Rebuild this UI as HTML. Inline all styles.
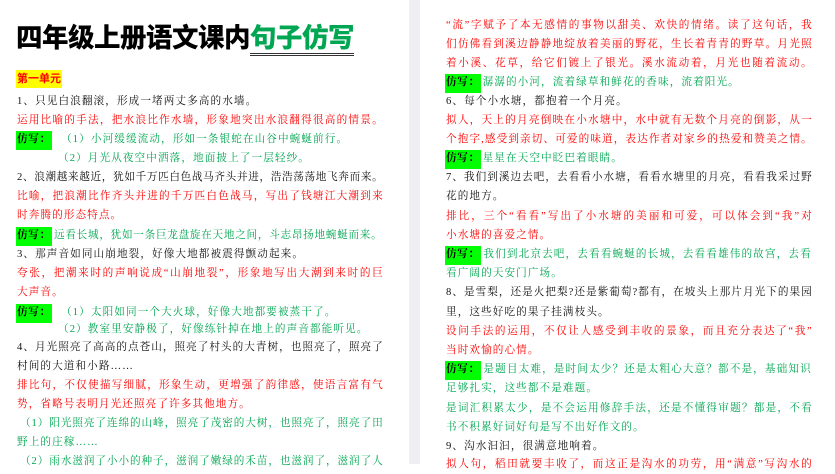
<!DOCTYPE html>
<html><head><meta charset="utf-8"><style>
*{margin:0;padding:0;box-sizing:border-box}
body{width:835px;height:464px;overflow:hidden;background:#fff;position:relative;font-family:"Liberation Serif","Noto Serif CJK SC",serif;}
.gap{position:absolute;left:409px;top:0;width:11px;height:464px;background:#efeff3}
.l{position:absolute;height:18px;line-height:18px;font-size:10.6px;letter-spacing:1.1px;white-space:nowrap}
.f{width:366px;text-align:justify;text-align-last:justify;letter-spacing:0.3px}
.k{color:#111}
.r{color:#ff0000}
.g{color:#00a651}
.hl{background:#00ff00;color:#000;font-weight:bold;display:inline-block;padding:0 1px;height:19px;margin-right:2px;letter-spacing:0.6px}
.title{position:absolute;left:16px;top:21px;font-family:"Liberation Sans","Noto Sans CJK SC",sans-serif;font-weight:900;font-size:26.5px;line-height:34px;letter-spacing:-0.5px;color:#000}
.title span{color:#00a651;border-bottom:3px double #333;}
.unit{position:absolute;left:16px;top:70px;height:18px;line-height:18px;background:#ffff00;color:#ff0000;font-weight:bold;font-size:11px;padding:0 1px;font-family:"Liberation Sans","Noto Sans CJK SC",sans-serif}
</style></head><body>
<div class="gap"></div>
<div class="title">四年级上册语文课内<span>句子仿写</span></div>
<div class="unit">第一单元</div>

<div class="l k" style="left:17px;top:93px">1、只见白浪翻滚，形成一堵两丈多高的水墙。</div>
<div class="l r f" style="left:17px;top:112px">运用比喻的手法，把水浪比作水墙，形象地突出水浪翻得很高的情景。</div>
<div class="l g" style="left:16px;top:131px"><span class="hl">仿写：</span>&nbsp;&nbsp;（1）小河缓缓流动，形如一条银蛇在山谷中蜿蜒前行。</div>
<div class="l g" style="left:58px;top:150px">（2）月光从夜空中洒落，地面披上了一层轻纱。</div>
<div class="l k f" style="left:17px;top:169px">2、浪潮越来越近，犹如千万匹白色战马齐头并进，浩浩荡荡地飞奔而来。</div>
<div class="l r f" style="left:17px;top:188px">比喻，把浪潮比作齐头并进的千万匹白色战马，写出了钱塘江大潮到来</div>
<div class="l r" style="left:17px;top:207px">时奔腾的形态特点。</div>
<div class="l g f" style="left:16px;top:227px"><span class="hl">仿写：</span>远看长城，犹如一条巨龙盘旋在天地之间，斗志昂扬地蜿蜒而来。</div>
<div class="l k" style="left:17px;top:246px">3、那声音如同山崩地裂，好像大地都被震得颤动起来。</div>
<div class="l r f" style="left:17px;top:265px">夸张，把潮来时的声响说成“山崩地裂”，形象地写出大潮到来时的巨</div>
<div class="l r" style="left:17px;top:284px">大声音。</div>
<div class="l g" style="left:16px;top:304px"><span class="hl">仿写：</span>&nbsp;&nbsp;（1）太阳如同一个大火球，好像大地都要被蒸干了。</div>
<div class="l g" style="left:58px;top:321px">（2）教室里安静极了，好像练针掉在地上的声音都能听见。</div>
<div class="l k f" style="left:17px;top:339px">4、月光照亮了高高的点苍山，照亮了村头的大青树，也照亮了，照亮了</div>
<div class="l k" style="left:17px;top:358px">村间的大道和小路……</div>
<div class="l r f" style="left:17px;top:377px">排比句，不仅使描写细腻，形象生动，更增强了韵律感，使语言富有气</div>
<div class="l r" style="left:17px;top:396px">势，省略号表明月光还照亮了许多其他地方。</div>
<div class="l g f" style="left:20px;top:415px;width:363px">（1）阳光照亮了连绵的山峰，照亮了茂密的大树，也照亮了，照亮了田</div>
<div class="l g" style="left:17px;top:434px">野上的庄稼……</div>
<div class="l g f" style="left:20px;top:453px;width:363px">（2）雨水滋润了小小的种子，滋润了嫩绿的禾苗，也滋润了，滋润了人</div>

<div class="l r f" style="left:446px;top:17px">“流”字赋予了本无感情的事物以甜美、欢快的情绪。读了这句话，我</div>
<div class="l r f" style="left:446px;top:36px">们仿佛看到溪边静静地绽放着美丽的野花，生长着青青的野草。月光照</div>
<div class="l r f" style="left:446px;top:55px">着小溪、花草，给它们镀上了银光。溪水流动着，月光也随着流动。</div>
<div class="l g" style="left:445px;top:74px"><span class="hl">仿写：</span>潺潺的小河，流着绿草和鲜花的香味，流着阳光。</div>
<div class="l k" style="left:446px;top:93px">6、每个小水塘，都抱着一个月亮。</div>
<div class="l r f" style="left:446px;top:112px">拟人，天上的月亮倒映在小水塘中，水中就有无数个月亮的倒影，从一</div>
<div class="l r f" style="left:446px;top:131px">个抱字,感受到亲切、可爱的味道，表达作者对家乡的热爱和赞美之情。</div>
<div class="l g" style="left:445px;top:150px"><span class="hl">仿写：</span>星星在天空中眨巴着眼睛。</div>
<div class="l k f" style="left:446px;top:169px">7、我们到溪边去吧，去看看小水塘，看看水塘里的月亮，看看我采过野</div>
<div class="l k" style="left:446px;top:188px">花的地方。</div>
<div class="l r f" style="left:446px;top:208px">排比，三个“看看”写出了小水塘的美丽和可爱，可以体会到“我”对</div>
<div class="l r" style="left:446px;top:227px">小水塘的喜爱之情。</div>
<div class="l g f" style="left:445px;top:246px"><span class="hl">仿写：</span>我们到北京去吧，去看看蜿蜒的长城，去看看雄伟的故宫，去看</div>
<div class="l g" style="left:446px;top:265px">看广阔的天安门广场。</div>
<div class="l k f" style="left:446px;top:284px">8、是雪梨，还是火把梨?还是紫葡萄?都有，在坡头上那片月光下的果园</div>
<div class="l k" style="left:446px;top:304px">里，这些好吃的果子挂满枝头。</div>
<div class="l r f" style="left:446px;top:323px">设问手法的运用，不仅让人感受到丰收的景象，而且充分表达了“我”</div>
<div class="l r" style="left:446px;top:342px">当时欢愉的心情。</div>
<div class="l g f" style="left:445px;top:361px"><span class="hl">仿写：</span>是题目太难，是时间太少？还是太粗心大意？都不是，基础知识</div>
<div class="l g" style="left:446px;top:380px">足够扎实，这些都不是难题。</div>
<div class="l g f" style="left:446px;top:400px">是词汇积累太少，是不会运用修辞手法，还是不懂得审题？都是，不看</div>
<div class="l g" style="left:446px;top:419px">书不积累好词好句是写不出好作文的。</div>
<div class="l k" style="left:446px;top:438px">9、沟水汩汩，很满意地响着。</div>
<div class="l r f" style="left:446px;top:456px">拟人句，稻田就要丰收了，而这正是沟水的功劳，用“满意”写沟水的</div>
</body></html>
